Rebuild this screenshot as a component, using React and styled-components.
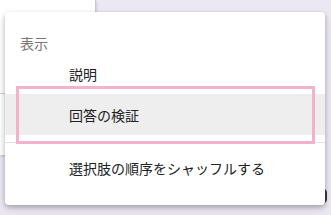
import React from 'react';
import styled, { createGlobalStyle } from 'styled-components';

const GlobalStyle = createGlobalStyle`
  html, body {
    margin: 0;
    padding: 0;
    background: #ebe7f3;
    font-family: "Noto Sans CJK JP", "Noto Sans", sans-serif;
    overflow: hidden;
  }
`;

const Page = styled.div`
  position: relative;
  width: 331px;
  height: 215px;
  background: #ebe7f3;
  overflow: hidden;
`;

const SidePanel = styled.div`
  width: 95px;
  height: 155px;
  background: #ffffff;
  border-right: 1px solid #c9c6cf;
  box-shadow: 0 1px 3px rgba(0, 0, 0, 0.2);
  display: flex;
  flex-direction: column;
`;

const PanelLine = styled.div`
  margin-top: 93px;
  height: 1px;
  background: #d0d0d0;
`;

const Blob = styled.div`
  position: absolute;
  left: 318px;
  top: 188px;
  width: 9px;
  height: 16px;
  border-radius: 0 5px 5px 0;
  background: #3a3a3a;
`;

const Menu = styled.div`
  position: absolute;
  left: 5px;
  top: 12px;
  width: 320px;
  background: #ffffff;
  border-radius: 4px;
  box-shadow: 0 2px 4px rgba(0, 0, 0, 0.22), 0 4px 10px rgba(0, 0, 0, 0.12);
  padding-bottom: 17px;
  display: flex;
  flex-direction: column;
`;

const Label = styled.div`
  padding: 21px 15px 1px;
  line-height: 20px;
  font-size: 14px;
  color: #757575;
`;

const Item = styled.div`
  position: relative;
  height: ${(p) => p.h || 40}px;
  display: flex;
  align-items: center;
  padding-left: 64px;
  font-size: 14px;
  color: #202124;
  background: ${(p) => (p.active ? '#eeeeee' : 'transparent')};
`;

const Highlight = styled.div`
  position: absolute;
  left: 11px;
  top: -8px;
  width: 293px;
  height: 52px;
  border: 3px solid #f3b1ca;
  pointer-events: none;
`;

const Divider = styled.div`
  height: 1px;
  background: #e0e0e0;
  margin: 7px 0 5px;
`;

export default function App() {
  return (
    <>
      <GlobalStyle />
      <Page>
        <SidePanel>
          <PanelLine />
        </SidePanel>
        <Blob />
        <Menu>
          <Label>表示</Label>
          <Item>説明</Item>
          <Item active h={41}>
            回答の検証
            <Highlight />
          </Item>
          <Divider />
          <Item>選択肢の順序をシャッフルする</Item>
        </Menu>
      </Page>
    </>
  );
}
